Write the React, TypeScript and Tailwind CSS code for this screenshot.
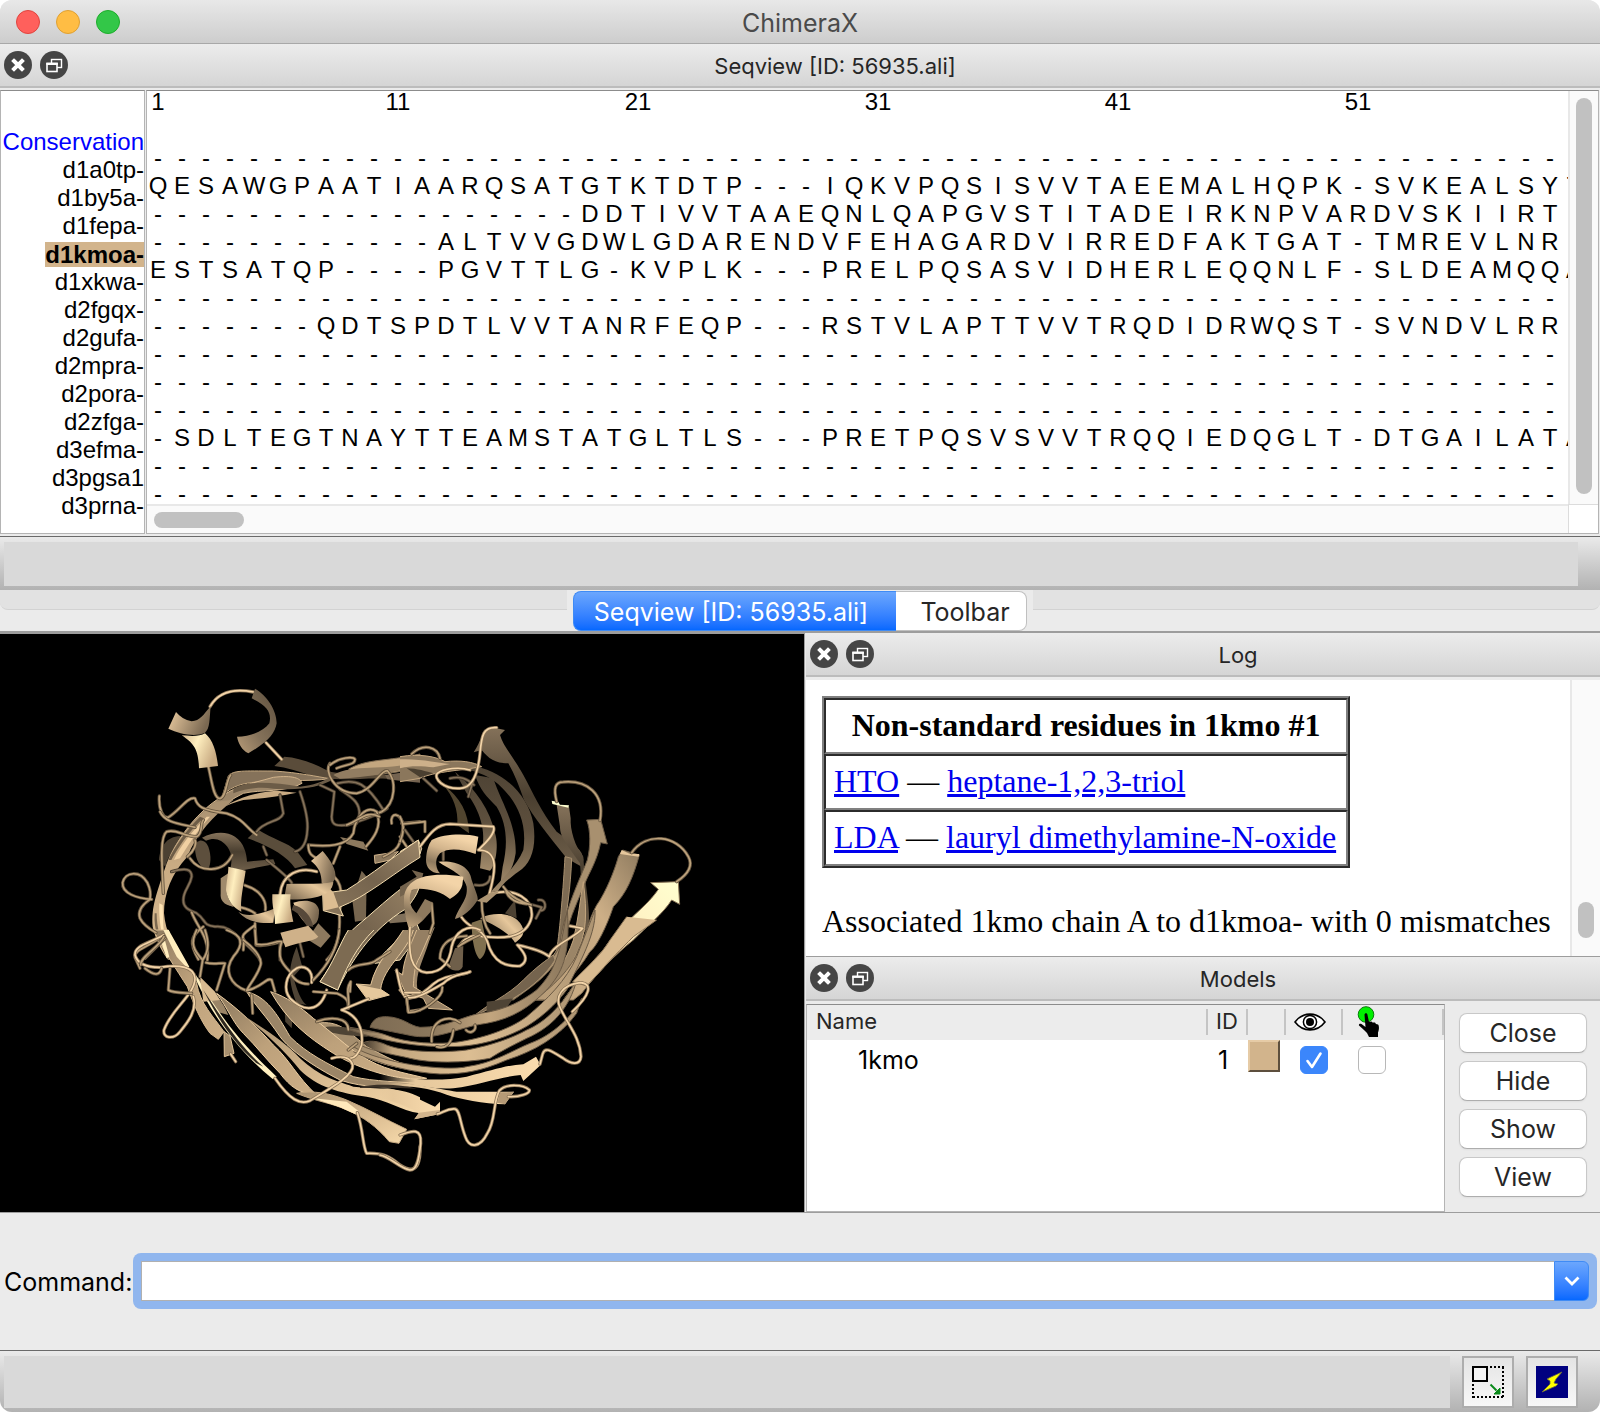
import { useState } from "react";

type SequenceRow = {
  name: string;
  residues: string;
  active?: boolean;
};

const GAPS = "-".repeat(59);

const sequences: SequenceRow[] = [
  { name: "d1a0tp-", residues: GAPS },
  { name: "d1by5a-", residues: "QESAWGPAATIAARQSATGTKTDTP---IQKVPQSISVVTAEEMALHQPK-SVKEALSYT" },
  { name: "d1fepa-", residues: "------------------DDTIVVTAAEQNLQAPGVSTITADEIRKNPVARDVSKIIRT" },
  { name: "d1kmoa-", residues: "------------ALTVVGDWLGDARENDVFEHAGARDVIRREDFAKTGAT-TMREVLNR", active: true },
  { name: "d1xkwa-", residues: "ESTSATQP----PGVTTLG-KVPLK---PRELPQSASVIDHERLEQQNLF-SLDEAMQQA" },
  { name: "d2fgqx-", residues: GAPS },
  { name: "d2gufa-", residues: "-------QDTSPDTLVVTANRFEQP---RSTVLAPTTVVTRQDIDRWQST-SVNDVLRR" },
  { name: "d2mpra-", residues: GAPS },
  { name: "d2pora-", residues: GAPS },
  { name: "d2zfga-", residues: GAPS },
  { name: "d3efma-", residues: "-SDLTEGTNAYTTEAMSTATGLTLS---PRETPQSVSVVTRQQIEDQGLT-DTGAILATA" },
  { name: "d3pgsa1", residues: GAPS },
  { name: "d3prna-", residues: GAPS },
];

const residueLinks = [
  { code: "HTO", name: "heptane-1,2,3-triol" },
  { code: "LDA", name: "lauryl dimethylamine-N-oxide" },
];

const modelActions = ["Close", "Hide", "Show", "View"];

// ---------- protein cartoon ----------

type Ribbon = { d: string; fill: string; edge?: string };
type Tone = "near" | "mid" | "far";
type Coil = { d: string; tone: Tone };
type Patch = { x: number; y: number; ribbons: Ribbon[]; coils: Coil[]; front?: Ribbon[] };

const coilShade: Record<Tone, [string, string]> = {
  near: ["#8b7558", "#f3d4a8"],
  mid: ["#63533e", "#bda27c"],
  far: ["#43382a", "#85725a"],
};

const patches: Patch[] = [
  // barrel, top left
  {
    x: 300,
    y: 78,
    ribbons: [
      { d: "M285,560 C290,535 315,535 325,560 C335,590 332,610 325,628 C300,625 285,600 285,560Z", fill: "#5d4f3d" },
      { d: "M177,600 C180,560 200,530 240,528 L262,545 C230,555 205,580 196,620Z", fill: "#4c4132" },
      { d: "M306,533 C340,515 380,513 405,530 C432,548 440,580 441,605 L520,598 L526,612 L420,632 L392,622 C398,590 392,575 382,560 C366,540 345,530 318,542Z", fill: "url(#farDown)" },
      { d: "M443,535 L472,508 C520,540 560,545 592,575 L622,615 L585,625 C560,585 500,555 443,535Z", fill: "#5a4d3b" },
      { d: "M523,318 L553,290 C600,293 640,310 690,335 C740,345 800,335 860,345 L862,356 C800,352 700,365 640,350 C600,335 560,322 523,318Z", fill: "#5a4c3a" },
      { d: "M385,348 C400,330 430,333 520,333 C600,338 650,350 690,356 C620,366 540,358 470,366 C430,370 400,376 368,405Z", fill: "#85725a", edge: "#c7aa82" },
      { d: "M362,412 C400,380 450,372 520,352 C580,345 602,355 606,370 C560,398 480,388 430,400 C370,430 320,470 290,520 L205,610 C230,530 300,450 362,412Z", fill: "#9c8669", edge: "#d2b48c" },
      { d: "M400,385 C450,360 520,368 600,380 C640,375 670,365 690,350 L700,358 C660,382 600,392 520,386 C480,380 440,385 400,400Z", fill: "#6c5c47" },
      { d: "M390,430 C430,408 480,395 530,392 L590,398 C540,410 480,415 430,420 C380,432 340,455 310,480Z", fill: "#c9ab83" },
      { d: "M745,328 C800,295 860,305 960,282 L960,330 C900,328 860,348 790,345", fill: "#c3a67f", edge: "#7d6a51" },
      { d: "M700,345 C760,310 850,335 960,305 L960,318 C880,338 800,352 720,356Z", fill: "#927d61" },
      { d: "M855,345 L960,330 L960,368 L900,362 L862,358Z", fill: "#746350" },
      { d: "M345,425 C280,480 225,540 200,610 C170,700 153,740 158,800 C170,850 190,880 205,900 L250,900 C220,850 197,820 192,760 C192,700 215,640 262,590 C290,520 340,470 400,420Z", fill: "url(#wall)" },
      { d: "M320,470 C270,520 240,560 222,600 L240,595 C262,560 292,510 330,470Z", fill: "#f0d0a2" },
      { d: "M300,470 C250,520 225,560 205,600 L214,600 C236,560 262,520 310,474Z", fill: "#6e5d47" },
      { d: "M178,730 C176,780 184,830 200,860 L190,800 L188,735Z", fill: "#ffe3b3" },
      { d: "M170,760 C170,800 180,850 215,900 L205,900 C180,860 160,810 164,760Z", fill: "#7b6850" },
      { d: "M757,720 L785,632 L800,650 L798,780 L765,785Z", fill: "#77664f" },
      { d: "M720,531 L790,545 L805,572 L740,552Z", fill: "#8d795e" },
      { d: "M823,586 L895,575 L870,600 L825,610Z", fill: "#8d795e", edge: "#d2b48c" },
      { d: "M860,770 L915,760 L925,785 L870,790Z", fill: "#80705a" },
      // inner strands that cross the middle of the barrel
      { d: "M960,650 C900,680 840,740 780,790 C740,820 720,860 703,900 L660,965 L713,990 C750,910 810,810 920,745 C945,712 962,692 960,650Z", fill: "url(#inner)", edge: "#f7e2b4" },
      { d: "M950,790 C890,840 850,880 825,910 L900,900 C920,870 950,840 962,820Z", fill: "#85725a", edge: "#f7e2b4" },
    ],
    coils: [
      { d: "M178,408 C175,450 190,475 205,472 C240,450 262,410 285,415 C292,440 305,450 380,460 C430,475 440,505 470,525", tone: "mid" },
      { d: "M180,455 C195,490 245,492 285,502", tone: "mid" },
      { d: "M540,405 L550,460 C540,488 495,480 470,515 M600,395 C612,430 625,480 622,510 C620,550 605,570 585,575", tone: "far" },
      { d: "M660,375 L703,395 L695,470 C695,498 712,498 745,495 C800,475 845,462 862,445", tone: "far" },
      { d: "M712,370 C770,355 800,370 850,450 M720,388 C750,410 782,425 778,465 L770,490", tone: "far" },
      { d: "M490,560 L500,585 M500,600 C550,640 570,660 575,668", tone: "far" },
      { d: "M190,700 C185,600 180,530 200,515 C230,505 250,530 290,530 C310,520 300,490 310,480", tone: "mid" },
      { d: "M270,595 C300,640 370,640 397,585 M262,590 C285,570 290,550 285,540", tone: "mid" },
      { d: "M155,718 C110,715 65,700 68,668 C75,635 120,630 142,668 C152,690 152,700 150,718 C125,735 113,755 120,775 C130,795 150,808 168,818", tone: "mid" },
      { d: "M190,825 C150,860 100,868 105,892 L120,925 M195,835 L135,895", tone: "mid" },
      { d: "M215,635 C260,622 275,628 275,650 C270,680 250,690 250,720 C250,745 268,750 290,760 C320,780 305,795 345,800 C390,795 410,830 435,850 C455,870 470,880 480,900", tone: "far" },
      { d: "M275,757 C290,800 330,830 322,900 M310,800 C270,830 268,850 295,898", tone: "mid" },
      { d: "M330,140 C350,105 385,82 460,96", tone: "near" },
      { d: "M498,248 L545,298", tone: "near" },
      { d: "M325,320 C335,360 340,415 360,416 C380,410 378,360 392,345", tone: "mid" },
      { d: "M690,310 C672,330 700,400 770,400 C820,390 840,330 862,332 C890,360 888,430 845,455 L790,475", tone: "mid" },
      { d: "M690,315 C720,290 760,290 765,298 C765,315 740,312 710,325", tone: "mid" },
      { d: "M625,555 C680,560 740,560 760,520 C765,470 800,435 830,455 C848,500 820,535 798,560", tone: "mid" },
      { d: "M625,555 C625,590 645,590 660,600 M720,560 L700,610", tone: "mid" },
      { d: "M740,495 C780,480 800,450 838,470", tone: "mid" },
      { d: "M875,490 C868,455 905,455 910,500 C900,560 895,570 850,590 M905,490 L960,485 M900,530 L920,560", tone: "mid" },
      { d: "M680,640 C725,650 730,700 718,760 C722,830 710,870 680,900", tone: "mid" },
      { d: "M540,705 C545,640 600,620 650,635", tone: "near" },
      { d: "M435,676 C480,690 500,720 496,750 M378,725 C410,745 440,740 465,760", tone: "mid" },
      { d: "M465,790 L468,855 C500,862 530,845 552,845 M465,795 C440,815 420,825 432,840 L430,870", tone: "mid" },
      { d: "M540,845 L540,900 M600,850 L610,890", tone: "far" },
    ],
    front: [
      { d: "M228,156 L205,206 C240,222 285,232 315,218 C330,205 328,180 332,138 C310,165 300,182 275,184 C255,180 240,170 228,156Z", fill: "url(#lightRight)" },
      { d: "M245,226 C280,250 295,265 297,325 L354,318 C350,280 340,240 315,220 C300,230 270,228 245,226Z", fill: "url(#glow)" },
      { d: "M465,86 C500,105 530,150 530,190 C525,220 505,245 445,280 C425,270 415,250 411,230 C450,230 490,215 508,190 C515,160 505,140 455,115Z", fill: "url(#hookShade)" },
      { d: "M362,655 L385,640 L380,700 C385,720 395,732 400,740 C370,735 360,720 362,700Z", fill: "#a08a6c" },
      { d: "M385,620 L437,632 C430,680 420,720 424,755 C400,745 380,715 378,690 C380,660 385,640 385,620Z", fill: "url(#glow)" },
      { d: "M415,755 C440,775 490,760 525,745 L520,788 C480,792 440,785 415,755Z", fill: "url(#lightLeft)" },
      { d: "M955,540 C880,590 820,640 740,690 L690,697 L682,678 L668,700 L670,752 L730,768 L718,742 C800,710 880,640 960,592Z", fill: "url(#inner)", edge: "#f4dcae" },
      { d: "M668,698 L684,680 L700,697 L716,742 L672,752Z", fill: "#dcbd92" },
      { d: "M633,603 L668,573 C692,600 710,630 706,655 L690,680 L665,670 C665,640 655,620 633,603Z", fill: "url(#lightRight)" },
      { d: "M560,672 C600,670 660,675 700,665 C698,700 660,722 552,718Z", fill: "url(#lightLeft)" },
      { d: "M580,728 C610,718 650,718 657,750 C658,785 645,800 625,798 C600,775 590,755 580,728Z", fill: "url(#lightRight)" },
      { d: "M580,735 C610,740 635,770 640,800 L620,798 C605,770 590,755 575,750Z", fill: "#57493a" },
      { d: "M655,790 L692,828 L662,863 L622,838Z", fill: "#8d795e" },
      { d: "M541,818 L625,797 L655,830 C640,845 600,845 556,862Z", fill: "#cfb189" },
      { d: "M517,703 L572,703 C568,730 575,760 580,785 L525,792 C525,760 515,740 517,703Z", fill: "url(#glow)" },
    ],
  },
  // barrel, top right
  {
    x: 1200,
    y: 198,
    ribbons: [
      { d: "M130,255 C180,290 207,340 207,400 L172,375 C175,330 160,290 130,255Z", fill: "#51452f" },
      { d: "M165,215 C230,270 270,330 285,400 C298,440 285,500 270,512 L240,505 L245,450 C260,400 240,330 200,280Z", fill: "url(#farUp)" },
      { d: "M225,225 L280,235 C300,300 350,370 347,460 C340,510 315,540 300,560 L308,500 C325,430 320,370 290,320 C260,290 240,270 225,225Z", fill: "url(#farUp)" },
      { d: "M210,195 C320,215 385,290 400,370 C410,440 395,490 355,515 C320,540 300,560 290,580 L265,585 C300,540 350,500 370,450 C380,380 360,330 330,290 C290,240 260,225 210,210Z", fill: "url(#farUp)" },
      { d: "M315,90 L268,80 C245,95 245,120 221,157 L245,150 C265,175 285,190 325,190 C345,225 358,260 372,300 C400,350 440,400 500,475 L545,500 L550,480 C550,450 520,430 470,395 C420,330 400,280 370,225 C340,170 310,140 300,105Z", fill: "url(#farDown)" },
      { d: "M0,170 C60,160 110,170 135,185 C180,180 220,185 245,200 C180,212 100,215 60,235 L0,245", fill: "#8b775c", edge: "#c3a67f" },
      { d: "M0,178 C60,175 120,190 150,192 L100,202 C70,200 40,195 0,205Z", fill: "#cdb08a" },
      { d: "M20,205 C50,205 80,215 100,220 L60,232Z", fill: "#4a3f30" },
      { d: "M495,470 L515,475 C512,560 500,640 490,700 C480,770 440,800 400,830 L330,885 L320,900 C390,830 450,790 470,750 C480,690 490,560 495,470Z", fill: "#7d6b53", edge: "#a8906f" },
      { d: "M470,315 L507,320 L512,355 C510,390 525,440 550,470 C555,560 572,620 566,680 L550,700 C550,620 545,560 540,490 C500,430 480,410 480,380Z", fill: "url(#farDown)" },
      { d: "M560,360 L602,358 L622,432 L602,428 C592,480 567,520 557,545 C535,600 510,650 500,700 C485,790 440,830 340,900 L300,900 C380,860 450,800 478,740 C490,640 530,560 562,480 C572,440 572,390 560,360Z", fill: "#a8906f", edge: "#6b5a45" },
      { d: "M550,545 C562,640 560,700 530,760 C500,830 450,880 430,900 L400,900 C460,840 500,780 520,720 C535,660 540,600 550,545Z", fill: "#9b8567", edge: "#c2a57e" },
      { d: "M668,450 L718,465 C700,530 680,580 640,620 C620,680 590,740 570,755 C530,820 480,870 440,900 L400,900 C450,870 520,800 535,750 C560,700 570,640 600,600 C630,550 650,490 655,470Z", fill: "url(#slant)", edge: "#6e5d47" },
      { d: "M752,548 L835,545 L839,613 L815,600 C790,640 740,680 700,720 C650,760 590,820 545,880 L520,900 L490,900 C520,860 560,800 610,750 C640,700 700,650 740,610 C760,590 770,575 775,568Z", fill: "url(#brightArrow)", edge: "#8b7558" },
      { d: "M455,302 L475,306 L480,314 L507,316 L505,323 L457,312Z", fill: "#ffffd0" },
      { d: "M665,450 L690,462 L718,462 L716,470 L660,462Z", fill: "#e6c79c" },
      { d: "M315,640 L345,600 L350,655Z", fill: "#4c4132" },
      { d: "M240,655 C280,635 330,640 352,660 C382,690 372,710 345,728 C325,695 280,675 240,655Z", fill: "url(#lightLeft)" },
      { d: "M215,668 L245,658 C250,700 275,750 240,778 C220,760 215,700 215,668Z", fill: "#80704f" },
      { d: "M165,745 L190,738 L188,800 C180,820 150,810 145,800Z", fill: "#6f5f4a" },
      { d: "M0,455 L55,420 L65,445 L60,462 L0,505", fill: "#85725a", edge: "#f4dcae" },
      { d: "M0,560 L50,530 L35,510 L70,520 L60,560 L0,590Z", fill: "#74634d" },
      { d: "M105,680 L60,720 C40,770 15,800 0,830 L20,878 L52,868 C45,820 70,780 88,722Z", fill: "#9c8669" },
    ],
    coils: [
      { d: "M35,162 C70,128 112,140 120,175", tone: "mid" },
      { d: "M70,235 L110,272 M150,235 C180,228 200,235 222,255 M205,290 L220,240", tone: "far" },
      { d: "M290,83 C250,80 245,105 240,160 C235,210 220,265 180,265 C130,268 100,235 112,220 C130,205 180,200 210,210", tone: "near" },
      { d: "M470,305 C460,265 465,246 490,246 C560,240 615,280 600,362", tone: "mid" },
      { d: "M695,458 C740,395 830,405 865,470 C882,500 860,525 830,545", tone: "mid" },
      { d: "M0,350 C15,380 10,400 0,425 M10,372 L75,365 L75,395", tone: "mid" },
      { d: "M15,390 L40,425 M130,450 L130,480 M225,555 C250,560 270,550 270,530", tone: "far" },
      { d: "M60,440 C90,400 110,372 150,372 L280,380 C290,400 250,435 235,450 C300,450 285,520 268,582 C350,560 400,600 395,650 C380,720 300,715 250,710 C210,700 190,720 180,735", tone: "near" },
      { d: "M245,600 C245,650 255,680 270,700 M310,560 C330,590 370,610 395,615 M318,575 C330,600 350,608 380,612", tone: "mid" },
      { d: "M400,615 L425,622 L408,655 M415,600 C440,595 440,630 425,632", tone: "far" },
      { d: "M95,610 L100,670 L90,700", tone: "mid" },
      { d: "M120,775 C120,740 140,710 200,708 M120,775 L150,800 M175,740 C200,720 230,710 240,705", tone: "mid" },
      { d: "M185,652 C210,690 245,680 262,725 C280,790 320,800 360,798 C392,780 370,755 352,735 C400,745 430,755 448,770 C455,735 530,710 548,685 L510,678", tone: "near" },
      { d: "M30,680 C25,760 30,812 80,818 C130,818 150,780 155,740 C165,695 205,670 240,690", tone: "near" },
      { d: "M0,870 C30,905 60,890 100,852 C140,820 180,830 210,815", tone: "near" },
    ],
    front: [
      { d: "M95,420 C130,400 200,400 235,410 L227,462 C190,450 150,440 120,460 C100,480 110,510 120,520 C90,520 78,500 78,480 C80,450 85,435 95,420Z", fill: "url(#helix)" },
      { d: "M115,485 C170,480 210,500 215,540 C225,570 235,590 233,600 C215,630 190,650 165,657 C175,620 205,600 200,560 C190,520 150,510 115,485Z", fill: "url(#lightRight)" },
      { d: "M75,597 L96,607 L92,635 L65,665 L40,655Z", fill: "#8d795e" },
      { d: "M12,590 C20,540 70,512 190,530 L187,555 C180,580 160,590 150,597 C120,570 60,560 35,570 C22,600 30,630 65,652 C70,665 55,680 25,682 C15,650 10,620 12,590Z", fill: "url(#helix)" },
      { d: "M230,603 L268,580 L300,572 L260,608Z", fill: "#ac9472" },
    ],
  },
  // barrel, bottom left
  {
    x: 300,
    y: 888,
    ribbons: [
      { d: "M590,50 L607,110 L580,140 C590,180 605,215 620,225 L590,220 C568,160 560,120 590,50Z", fill: "#4f4435" },
      { d: "M553,230 L580,240 L575,295 L556,275Z", fill: "#4f4435" },
      { d: "M650,280 C720,268 750,310 800,350 C860,380 900,408 960,408 L960,418 C880,418 800,390 740,350", fill: "#a58e6e", edge: "#e2c499" },
      { d: "M680,290 C750,285 800,310 840,312 L800,320 C760,318 720,315 660,300Z", fill: "#4f4435" },
      { d: "M512,185 C560,200 600,230 640,265 C700,310 740,350 780,375 C850,420 900,425 980,445 C900,455 780,420 700,370 C620,320 560,270 512,185Z", fill: "url(#strand)", edge: "#edcea1" },
      { d: "M440,185 C500,200 530,250 570,320 C620,370 680,400 760,440 C820,455 900,455 990,462 C880,475 790,475 720,450 C640,410 570,360 540,320 C500,260 460,220 440,185Z", fill: "#9b8567", edge: "#e6c89c" },
      { d: "M160,0 L205,0 C220,60 270,110 290,160 C300,220 340,260 372,305 L355,328 L330,310 C300,270 280,220 262,170 C230,120 190,60 160,0Z", fill: "url(#strand)", edge: "#d9bb91" },
      { d: "M372,305 L390,318 L402,370 L373,380Z", fill: "#a8906f", edge: "#e2c499" },
      { d: "M290,140 C340,180 370,215 385,255 L350,245 C330,210 305,170 290,140Z", fill: "#9b8567" },
      { d: "M350,190 C420,240 470,290 520,345 C570,390 590,440 650,495 C600,492 570,470 540,430 C500,390 470,350 430,310 C400,280 380,230 350,190Z", fill: "url(#strand)", edge: "#edcea1" },
      { d: "M420,250 C500,300 560,340 600,385 C660,440 700,450 760,470 C860,480 900,470 960,502 L960,550 C900,540 860,510 800,500 C720,490 650,470 600,420 C560,370 500,310 420,250", fill: "url(#lightDown)" },
      { d: "M590,490 C640,480 690,490 740,510 C800,535 860,570 920,598 L897,640 L868,635 C830,590 790,560 740,540 C700,520 650,515 590,490Z", fill: "url(#lightDown)", edge: "#c7aa82" },
      { d: "M288,135 C340,225 400,320 530,440 L518,447 C400,350 330,240 288,150Z", fill: "#fff0c0" },
      { d: "M300,140 L345,185 L360,210 L310,215 Z", fill: "#d9bb91" },
      { d: "M180,25 L200,85 L208,80 L192,20Z M190,0 L230,80 L262,115 L268,110 L206,0Z", fill: "#ffedbd" },
      { d: "M310,180 C370,270 420,350 490,410 L470,400 C400,340 350,260 310,180Z", fill: "#2f2820" },
      { d: "M640,505 L740,515 L778,545 L765,552 L720,532Z", fill: "#ffe9bb" },
      { d: "M745,0 C720,40 700,100 660,155 L713,180 C740,110 770,50 822,0", fill: "#7d6b52", edge: "#f7e2b4" },
      { d: "M910,0 C880,50 830,90 812,165 L768,162 L805,212 L868,195 L842,178 C850,110 920,70 940,0", fill: "#9b8567", edge: "#e6c89c" },
      { d: "M768,162 L812,172 L842,178 L868,195 L805,210Z", fill: "#e6c89c" },
    ],
    coils: [
      { d: "M290,0 C270,40 280,60 308,90 C330,60 325,30 315,0 M308,90 L300,140", tone: "mid" },
      { d: "M318,98 C340,105 360,98 375,100 L350,180", tone: "mid" },
      { d: "M380,0 C425,15 435,40 400,80 C370,120 390,165 440,182", tone: "mid" },
      { d: "M430,30 C470,60 490,90 480,110 C470,140 450,160 440,182 C490,170 500,140 515,150 L525,185 M455,195 L458,250", tone: "mid" },
      { d: "M465,0 L468,42 C500,52 530,30 545,35 C530,80 545,100 570,125 C580,150 600,162 625,162", tone: "mid" },
      { d: "M635,158 C640,115 610,105 590,115 C555,135 550,180 570,205 C610,245 660,250 680,180", tone: "near" },
      { d: "M640,150 C670,120 710,70 718,0 M640,185 L710,190 C745,205 745,215 745,235", tone: "mid" },
      { d: "M745,235 C750,200 735,180 752,155 L750,185 M745,120 C770,95 810,110 830,90 L870,65", tone: "mid" },
      { d: "M650,275 C690,260 745,260 745,300 M745,360 L770,340", tone: "mid" },
      { d: "M890,120 C900,170 905,200 925,205 L960,195 M920,205 L925,245 L960,240", tone: "near" },
      { d: "M190,15 C150,40 103,45 105,75 C110,95 130,112 180,112 C240,103 282,110 285,145 C285,195 215,235 192,300 C188,325 220,330 240,305 C265,275 292,240 280,200", tone: "near" },
      { d: "M192,20 C180,50 120,80 122,105 M135,115 C160,135 178,140 185,115 M210,115 L205,180 C220,190 255,188 275,190", tone: "mid" },
      { d: "M392,372 L407,395", tone: "near" },
      { d: "M725,240 L805,207 M725,240 C775,255 790,300 785,345 C775,375 765,385 750,385", tone: "near" },
      { d: "M525,445 C570,510 600,525 630,512 C700,470 762,435 758,405 C750,378 720,378 695,385", tone: "near" },
      { d: "M772,548 C790,600 788,650 800,670 C850,668 870,680 900,705 C940,730 962,720 960,650", tone: "near" },
    ],
  },
  // barrel, bottom right: long strands fade in from the left and sweep up
  {
    x: 1140,
    y: 888,
    ribbons: [
      { d: "M270,268 C330,215 380,200 430,150 C470,110 500,90 520,75 L525,90 C500,130 460,170 400,205 C360,225 310,240 270,268Z", fill: "#75644e", edge: "#a8906f" },
      { d: "M320,215 L400,205 L375,240 L320,245Z", fill: "#4f4435" },
      { d: "M-30,292 C-20,262 0,260 20,260 C70,262 90,288 120,292 C200,292 240,262 300,250 C380,240 430,210 470,180 C510,140 530,100 545,30 L562,-60 C572,80 545,130 500,180 C450,230 400,265 320,280 C240,290 180,330 100,318 C60,310 10,300 -30,292", fill: "url(#sweepDim)", edge: "#6b5a45" },
      { d: "M-90,292 C-40,300 0,308 20,316 C80,340 180,345 240,335 C330,320 400,290 440,260 C500,210 560,150 590,80 L645,-60 C650,20 580,130 560,180 C530,220 480,270 420,300 C360,330 300,345 240,349 C160,352 60,350 -90,300", fill: "url(#sweep)", edge: "#6b5a45" },
      { d: "M-60,345 C-40,325 0,335 20,345 C70,365 180,370 260,360 C340,345 400,322 440,300 C500,275 550,220 590,150 C570,230 520,290 440,325 C400,345 360,365 330,385 C250,400 150,400 90,385 C50,375 -20,365 -60,345", fill: "url(#sweep)", edge: "#6b5a45" },
      { d: "M-80,350 C0,400 200,425 260,410 C340,400 400,360 450,340 C520,315 580,255 605,205 L590,250 C540,320 460,365 380,390 C300,425 250,432 180,432 C100,428 0,405 -80,365", fill: "url(#sweep)", edge: "#6b5a45" },
      { d: "M0,428 C80,450 180,455 260,440 C340,420 380,405 430,403 L468,380 L482,405 L430,453 L422,435 C360,440 300,465 220,475 C140,480 80,455 0,450", fill: "url(#sweepLight)" },
      { d: "M0,456 C100,458 180,478 230,485 L360,485 L402,485 L375,523 C310,520 240,508 200,494 C150,475 80,464 0,466", fill: "url(#sweepLight)" },
      { d: "M360,487 L380,487 L402,485 L375,523 L352,518Z", fill: "#b59a76" },
      { d: "M-60,470 C0,458 80,466 110,476 L60,474 C20,470 -20,474 -60,474Z", fill: "#3b3227" },
      { d: "M0,472 C60,475 120,510 165,530 L180,515 L180,552 L103,568 L117,548 C80,530 40,512 0,505", fill: "url(#sweepLight)" },
      { d: "M103,568 L117,548 L180,540 L180,552Z", fill: "#d2b48c" },
      { d: "M830,-30 L760,20 C720,60 690,90 660,125 L620,168 L578,155 C620,110 660,80 690,30 L740,-40", fill: "#d9bb91", edge: "#8b7558" },
      { d: "M155,0 L120,80 C100,110 102,150 100,170 L150,200 L217,240 L145,235 L130,205 L75,185 L45,120 L68,135 C70,90 90,50 110,0", fill: "#957f63", edge: "#d9bb91" },
    ],
    coils: [
      { d: "M155,335 C150,270 205,250 240,278 M258,300 C272,315 290,300 285,285 M220,300 C215,345 195,358 170,350", tone: "mid" },
      { d: "M75,188 L120,188", tone: "near" },
      { d: "M75,200 C100,212 140,190 190,160 C220,130 250,135 270,125", tone: "near" },
      { d: "M80,205 L85,247 C120,250 190,205 187,172", tone: "mid" },
      { d: "M577,245 C630,195 640,160 600,158 C545,165 525,200 540,232 C560,280 600,320 603,380 C600,410 570,400 550,385 C510,360 495,350 488,372 L480,402", tone: "near" },
      { d: "M385,500 C420,502 450,490 448,480 C430,463 378,460 358,482 C338,520 348,570 322,610 C300,655 268,655 256,620 C240,580 240,540 225,537 C200,535 190,548 172,552", tone: "near" },
      { d: "M60,615 C100,600 125,595 122,640 C117,690 110,720 90,720 C60,715 30,680 0,675", tone: "near" },
    ],
  },
];

function RibbonShapes({ ribbons }: { ribbons: Ribbon[] }) {
  return (
    <>
      {ribbons.map((r, i) => (
        <path key={i} d={r.d} fill={r.fill} stroke={r.edge ?? "none"} strokeWidth={3} />
      ))}
    </>
  );
}

function ProteinView() {
  return (
    <svg viewBox="0 0 2412 1734" className="block h-full w-full" role="img" aria-label="1kmo ribbon model">
      <defs>
        <linearGradient id="glow" x1="0" y1="0" x2="1" y2="0.4">
          <stop offset="0" stopColor="#d2b48c" />
          <stop offset="0.45" stopColor="#ffefbf" />
          <stop offset="1" stopColor="#c9ab83" />
        </linearGradient>
        <linearGradient id="helix" x1="0" y1="1" x2="0.4" y2="0">
          <stop offset="0" stopColor="#c3a67f" />
          <stop offset="0.3" stopColor="#8d795e" />
          <stop offset="0.65" stopColor="#d2b48c" />
          <stop offset="1" stopColor="#f3d4a8" />
        </linearGradient>
        <linearGradient id="lightRight" x1="0" y1="0" x2="1" y2="0.3">
          <stop offset="0" stopColor="#f0d0a4" />
          <stop offset="1" stopColor="#7a6851" />
        </linearGradient>
        <linearGradient id="lightLeft" x1="1" y1="0" x2="0" y2="0.6">
          <stop offset="0" stopColor="#a8906f" />
          <stop offset="0.4" stopColor="#e6c79b" />
          <stop offset="1" stopColor="#8b775c" />
        </linearGradient>
        <linearGradient id="hookShade" x1="0" y1="1" x2="1" y2="0">
          <stop offset="0" stopColor="#b99d79" />
          <stop offset="0.4" stopColor="#85725a" />
          <stop offset="1" stopColor="#5d4f3d" />
        </linearGradient>
        <linearGradient id="farDown" x1="0" y1="0" x2="0" y2="1">
          <stop offset="0" stopColor="#85725a" />
          <stop offset="0.5" stopColor="#4a3f30" />
          <stop offset="1" stopColor="#6e5e49" />
        </linearGradient>
        <linearGradient id="farUp" x1="0" y1="0" x2="0" y2="1">
          <stop offset="0" stopColor="#4f4435" />
          <stop offset="0.5" stopColor="#5d4f3d" />
          <stop offset="1" stopColor="#a28b6b" />
        </linearGradient>
        <linearGradient id="wall" x1="0" y1="0" x2="0" y2="1">
          <stop offset="0" stopColor="#a89070" />
          <stop offset="0.4" stopColor="#c9ab83" />
          <stop offset="1" stopColor="#d9bb91" />
        </linearGradient>
        <linearGradient id="slant" x1="1" y1="0" x2="0" y2="1">
          <stop offset="0" stopColor="#8f7b5f" />
          <stop offset="0.4" stopColor="#cdaf87" />
          <stop offset="1" stopColor="#b59a76" />
        </linearGradient>
        <linearGradient id="brightArrow" x1="1" y1="0" x2="0" y2="1">
          <stop offset="0" stopColor="#ffffd0" />
          <stop offset="0.35" stopColor="#fff2c4" />
          <stop offset="0.6" stopColor="#d9bb91" />
          <stop offset="1" stopColor="#c3a67f" />
        </linearGradient>
        <linearGradient id="inner" x1="1" y1="0" x2="0" y2="1">
          <stop offset="0" stopColor="#9b8567" />
          <stop offset="0.5" stopColor="#75644e" />
          <stop offset="1" stopColor="#8b775c" />
        </linearGradient>
        <linearGradient id="strand" x1="0" y1="0" x2="1" y2="1">
          <stop offset="0" stopColor="#8d795e" />
          <stop offset="0.5" stopColor="#bda17b" />
          <stop offset="1" stopColor="#cdaf87" />
        </linearGradient>
        <linearGradient id="lightDown" x1="0" y1="0" x2="1" y2="1">
          <stop offset="0" stopColor="#a8906f" />
          <stop offset="0.6" stopColor="#dcbe93" />
          <stop offset="1" stopColor="#f6d9aa" />
        </linearGradient>
        <linearGradient id="sweep" x1="0" y1="0" x2="1" y2="0">
          <stop offset="0" stopColor="#b99d79" stopOpacity="0.3" />
          <stop offset="0.15" stopColor="#c3a67f" />
          <stop offset="0.5" stopColor="#dcbe93" />
          <stop offset="1" stopColor="#ad9472" />
        </linearGradient>
        <linearGradient id="sweepDim" x1="0" y1="0" x2="1" y2="0">
          <stop offset="0" stopColor="#7d6b53" />
          <stop offset="0.3" stopColor="#8b775c" />
          <stop offset="0.6" stopColor="#c3a67f" />
          <stop offset="1" stopColor="#8b775c" />
        </linearGradient>
        <linearGradient id="sweepLight" x1="0" y1="0" x2="1" y2="0">
          <stop offset="0" stopColor="#e6c89c" stopOpacity="0" />
          <stop offset="0.22" stopColor="#e6c89c" />
          <stop offset="1" stopColor="#fadcae" />
        </linearGradient>
      </defs>
      {patches.map((p, i) => (
        <g key={i} transform={`translate(${p.x} ${p.y})`}>
          <RibbonShapes ribbons={p.ribbons} />
        </g>
      ))}
      {patches.map((p, i) => (
        <g key={i} transform={`translate(${p.x} ${p.y})`} fill="none" strokeLinecap="round" strokeLinejoin="round">
          {p.coils.map((c, j) => (
            <g key={j}>
              <path d={c.d} stroke={coilShade[c.tone][0]} strokeWidth={10} />
              <path d={c.d} stroke={coilShade[c.tone][1]} strokeWidth={5} />
            </g>
          ))}
        </g>
      ))}
      {patches.map((p, i) => (
        <g key={i} transform={`translate(${p.x} ${p.y})`}>
          <RibbonShapes ribbons={p.front ?? []} />
        </g>
      ))}
    </svg>
  );
}

// ---------- icons ----------

function CloseIcon() {
  return (
    <svg viewBox="0 0 28 28" className="size-7" aria-hidden="true">
      <circle cx="14" cy="14" r="14" fill="#454545" />
      <path d="M10 10l8 8M18 10l-8 8" stroke="#fff" strokeWidth="4" strokeLinecap="square" />
    </svg>
  );
}

function FloatIcon() {
  return (
    <svg viewBox="0 0 28 28" className="size-7" aria-hidden="true">
      <circle cx="14" cy="14" r="14" fill="#454545" />
      <rect x="11.5" y="8.5" width="10" height="8" fill="none" stroke="#fff" strokeWidth="1.4" />
      <rect x="7" y="12.5" width="10" height="8" fill="#454545" stroke="#fff" strokeWidth="1.6" />
      <path d="M6.4 12.8h11.4" stroke="#fff" strokeWidth="2.2" />
    </svg>
  );
}

function EyeIcon() {
  return (
    <svg viewBox="0 0 32 18" className="h-[18px] w-8" aria-hidden="true">
      <path d="M1 9C9-1.5 23-1.5 31 9C23 19.500 9 19.500 1 9Z" fill="#fff" stroke="#000" strokeWidth="1.6" />
      <circle cx="16" cy="9" r="6.600" fill="#fff" stroke="#000" strokeWidth="1.500" />
      <circle cx="16" cy="9" r="4" fill="#000" />
    </svg>
  );
}

function SelectIcon() {
  return (
    <svg viewBox="0 0 24 32" className="h-8 w-6" aria-hidden="true">
      <circle cx="9" cy="8.500" r="7.800" fill="#00f000" stroke="#0a7a0a" strokeWidth="1" />
      <path
        d="M7.500 8.500C8 6.800 10 6.800 10.400 8.500L12 16L14.500 15.500L15.500 16.500L18 16.500L19 18L21 18.500C22.500 20 22 24 21 26.500L21 31L12 31L10 27C7 24 4 21 2 19.500C1.500 18 3 17.500 4.500 18L8.500 21Z"
        fill="#000"
      />
    </svg>
  );
}

function ResizeIcon() {
  return (
    <svg viewBox="0 0 32 32" className="size-8" fill="none" aria-hidden="true">
      <path d="M18 1h14M31 1v31M1 18v14M1 31h30" stroke="#000" strokeWidth="2" strokeDasharray="2 2" />
      <rect x="1" y="1" width="14" height="14" fill="#f4f4f4" stroke="#000" strokeWidth="2" />
      <path d="M18.500 18.500l6 6" stroke="#0a8a1a" strokeWidth="2" />
      <path d="M28 22v6h-6z" fill="#0a8a1a" stroke="#0a8a1a" />
    </svg>
  );
}

function LightningIcon() {
  return (
    <svg viewBox="0 0 32 32" className="size-8" aria-hidden="true">
      <rect width="32" height="32" fill="#000080" />
      <path d="M26 6L15 11L11 13L14 15L14 18L6 26L20 20L22 18L18 17L20 13Z" fill="#ffff00" stroke="#6b6b3c" strokeWidth="0.800" />
    </svg>
  );
}

// ---------- panels ----------

function DockHeader({ title }: { title: string }) {
  return (
    <header className="flex h-11 items-center gap-2 border-b-2 border-[#bcbcbc] bg-linear-to-b from-[#ececec] to-[#d5d5d5] pl-1">
      <button type="button" aria-label={`Close ${title}`} className="rounded-full">
        <CloseIcon />
      </button>
      <button type="button" aria-label={`Float ${title}`} className="rounded-full">
        <FloatIcon />
      </button>
      <h2 className="flex-1 pt-0.5 pr-1.5 text-center text-[22px] leading-7 text-[#262626]">{title}</h2>
    </header>
  );
}

function SequencePanel() {
  return (
    <div className="mt-0.5 flex gap-px pr-px pb-0.5 font-['Liberation_Sans',Arial,sans-serif] text-2xl text-black">
      <div className="w-[145px] shrink-0 border border-[#b4b4b4] border-t-[#8c8c8c] bg-white pt-[37px]">
        <div className="h-7 text-right leading-7 text-[#0000ff]">Conservation</div>
        {sequences.map((s) => (
          <div key={s.name} className="flex h-7 items-center justify-end">
            {s.active ? (
              <span className="bg-[#d2b48c] leading-[25px] font-bold">{s.name}</span>
            ) : (
              <span className="leading-7">{s.name}</span>
            )}
          </div>
        ))}
      </div>

      <div className="grid min-w-0 flex-1 grid-cols-[minmax(0,1fr)_30px] grid-rows-[413px_29px] border border-[#b4b4b4] border-t-[#8c8c8c] bg-white">
        <div className="-ml-px min-w-0">
          <div className="flex h-[53px] leading-[22px]">
            {Array.from({ length: 59 }, (_, i) => (
              <span key={i} className="flex w-6 shrink-0 justify-center whitespace-nowrap">
                {i % 10 === 0 ? i + 1 : ""}
              </span>
            ))}
          </div>
          <div className="overflow-x-clip">
            {sequences.map((s) => (
              <div key={s.name} className="flex h-7 leading-7">
                {s.residues.split("").map((r, i) => (
                  <span key={i} className="w-6 shrink-0 text-center">
                    {r}
                  </span>
                ))}
              </div>
            ))}
          </div>
        </div>
        <div className="border-l-2 border-[#e8e8e8] bg-[#fafafa] px-1.5 pt-[7px] pb-2.5">
          <div className="h-full w-4 rounded-full bg-[#c1c1c1]" />
        </div>
        <div className="border-t-2 border-[#e8e8e8] bg-[#fafafa] px-[7px] py-1.5">
          <div className="h-4 w-[90px] rounded-full bg-[#c1c1c1]" />
        </div>
        <div className="border-t border-l border-[#dcdcdc] bg-white" />
      </div>
    </div>
  );
}

function LogPanel() {
  return (
    <section>
      <DockHeader title="Log" />
      <div className="mt-[3px] flex bg-white">
        <div className="min-w-0 flex-1 p-4 pr-0 font-['Liberation_Serif','Times_New_Roman',serif] text-[32px] leading-9 text-black">
          <table className="border-separate border-spacing-0 border-2 border-t-[#808080] border-r-[#2b2b2b] border-b-[#2b2b2b] border-l-[#808080]">
            <thead>
              <tr>
                <th className="border-2 border-t-[#2b2b2b] border-r-[#808080] border-b-[#808080] border-l-[#2b2b2b] px-2 pt-[7px] pb-[9px] font-bold">
                  Non-standard residues in 1kmo #1
                </th>
              </tr>
            </thead>
            <tbody>
              {residueLinks.map((r) => (
                <tr key={r.code}>
                  <td className="border-2 border-t-[#2b2b2b] border-r-[#808080] border-b-[#808080] border-l-[#2b2b2b] pt-[7px] pr-2.5 pb-[9px] pl-2 whitespace-nowrap">
                    <a href={`#${r.code}`} className="text-[#0000ee] underline">{r.code}</a>
                    {" — "}
                    <a href={`#${r.code}-name`} className="text-[#0000ee] underline">{r.name}</a>
                  </td>
                </tr>
              ))}
            </tbody>
          </table>
          <p className="mt-[35px] mb-px whitespace-nowrap">Associated 1kmo chain A to d1kmoa- with 0 mismatches</p>
        </div>
        <div className="flex w-[30px] flex-col justify-end border-l-2 border-[#e8e8e8] bg-[#fafafa] px-1.5 pb-[18px]">
          <div className="h-9 w-4 rounded-full bg-[#c1c1c1]" />
        </div>
      </div>
    </section>
  );
}

function ModelsPanel() {
  const [shown, setShown] = useState(true);
  const [selected, setSelected] = useState(false);

  return (
    <section className="flex flex-1 flex-col border-t border-[#9d9d9d]">
      <DockHeader title="Models" />
      <div className="mt-[3px] flex flex-1 gap-3.5 pr-[13px]">
        <div className="min-w-0 flex-1 border border-[#b4b4b4] border-t-[#8c8c8c] bg-white">
          <table className="w-full table-fixed border-collapse text-left">
            <colgroup>
              <col />
              <col className="w-10" />
              <col className="w-[38px]" />
              <col className="w-[57px]" />
              <col className="w-[101px]" />
            </colgroup>
            <thead className="bg-[#ececec] text-[22px] leading-6 text-[#262626]">
              <tr className="h-[35px] align-top">
                <th className="p-0 pt-1 font-normal">
                  <div className="h-[26px] border-r-2 border-[#c4c4c4] pl-[9px]">Name</div>
                </th>
                <th className="p-0 pt-1 font-normal">
                  <div className="h-[26px] border-r-2 border-[#c4c4c4] text-center">ID</div>
                </th>
                <th className="p-0 pt-1" aria-label="Color">
                  <div className="h-[26px] border-r-2 border-[#c4c4c4]" />
                </th>
                <th className="p-0 pt-1" aria-label="Shown">
                  <div className="flex h-[26px] items-center border-r-2 border-[#c4c4c4] pl-2">
                    <EyeIcon />
                  </div>
                </th>
                <th className="p-0 pt-1" aria-label="Selected">
                  <div className="flex h-[26px] items-center border-r-2 border-[#c4c4c4] pl-3.5">
                    <SelectIcon />
                  </div>
                </th>
              </tr>
            </thead>
            <tbody className="text-[25px] leading-8 text-black">
              <tr className="h-10">
                <td className="py-0 pl-[51px]">1kmo</td>
                <td className="py-0 pr-2.5 pl-0 text-center">1</td>
                <td className="p-0 align-top">
                  <div className="size-8 border-2 border-t-[#e6cba6] border-r-[#5d4f3d] border-b-[#5d4f3d] border-l-[#e6cba6] bg-[#d2b48c]" />
                </td>
                <td className="p-0 pl-[14px]">
                  <span className="grid w-7">
                    <input
                      type="checkbox"
                      aria-label="Show 1kmo"
                      checked={shown}
                      onChange={(e) => setShown(e.target.checked)}
                      className="size-7 appearance-none rounded-md border border-[#b8b8b8] bg-white [grid-area:1/1] checked:border-[#3b86fb] checked:bg-[#3b86fb]"
                    />
                    {shown && (
                      <svg viewBox="0 0 28 28" className="pointer-events-none size-7 [grid-area:1/1]" fill="none" aria-hidden="true">
                        <path d="M7.500 15l4.500 6L20.500 7.500" stroke="#fff" strokeWidth="2.600" strokeLinecap="round" strokeLinejoin="round" />
                      </svg>
                    )}
                  </span>
                </td>
                <td className="p-0 pl-[15px]">
                  <span className="grid w-7">
                    <input
                      type="checkbox"
                      aria-label="Select 1kmo"
                      checked={selected}
                      onChange={(e) => setSelected(e.target.checked)}
                      className="size-7 appearance-none rounded-md border border-[#b8b8b8] bg-white checked:bg-[#3b86fb]"
                    />
                  </span>
                </td>
              </tr>
            </tbody>
          </table>
        </div>
        <div className="flex w-32 flex-col gap-2 pt-[9px] pb-[14px]">
          {modelActions.map((label) => (
            <button
              key={label}
              type="button"
              className="h-10 rounded-lg border border-[#c8c8c8] border-b-[#adadad] bg-white text-[25px] leading-8 text-[#262626] shadow-xs"
            >
              {label}
            </button>
          ))}
        </div>
      </div>
    </section>
  );
}

export default function App() {
  const [command, setCommand] = useState("");

  return (
    <div className="min-h-screen bg-white">
      <div className="flex min-h-screen flex-col overflow-hidden rounded-xl bg-[#ebebeb] font-[Inter,sans-serif]">
        {/* title bar */}
        <header className="grid h-11 grid-cols-[1fr_auto_1fr] items-center border-b border-[#a8a8a8] bg-linear-to-b from-[#e8e8e8] to-[#cdcdcd] px-4">
          <div className="flex gap-4">
            <button type="button" aria-label="Close window" className="size-6 rounded-full border border-[#e0443e] bg-[#ff605c]" />
            <button type="button" aria-label="Minimize window" className="size-6 rounded-full border border-[#dfa032] bg-[#ffbd44]" />
            <button type="button" aria-label="Zoom window" className="size-6 rounded-full border border-[#1dad2b] bg-[#33c748]" />
          </div>
          <h1 className="pt-0.5 text-[25px] leading-8 text-[#4a4a4a]">ChimeraX</h1>
          <div />
        </header>

        {/* sequence viewer */}
        <DockHeader title="Seqview [ID: 56935.ali]" />
        <SequencePanel />
        <div className="border-t border-[#6a6a6a] bg-linear-to-b from-[#eaeaea] to-[#b2b2b2] pt-[5px] pr-[22px] pb-1 pl-1">
          <div className="h-11 bg-[#d9d9d9]" />
        </div>

        {/* dock tabs */}
        <div className="flex items-start border-b-2 border-[#9d9d9d]">
          <div className="h-5 flex-1 rounded-bl-lg border-b border-[#d2d2d2] bg-[#e2e2e2]" />
          <div role="tablist" className="mx-1.5 mt-px flex h-10 text-[25px] leading-8">
            <button
              type="button"
              role="tab"
              aria-selected="true"
              className="w-[323px] rounded-l-lg border border-r-0 border-[#3f8bf5] bg-linear-to-b from-[#6ba6fd] to-[#0568ff] pt-0.5 pr-2 text-center text-white"
            >
              Seqview [ID: 56935.ali]
            </button>
            <button
              type="button"
              role="tab"
              aria-selected="false"
              className="w-[131px] rounded-r-lg border border-l-0 border-[#c0c0c0] bg-white pt-0.5 pl-2 text-center text-[#262626]"
            >
              Toolbar
            </button>
          </div>
          <div className="h-5 flex-1 rounded-br-lg border-b border-[#d2d2d2] bg-[#e2e2e2]" />
        </div>

        {/* graphics + side panels */}
        <main className="grid grid-cols-[805fr_795fr] border-b border-[#9d9d9d]">
          <div className="border-t border-r border-[#9d9d9d] bg-black">
            <ProteinView />
          </div>
          <div className="flex min-w-0 flex-col border-l border-[#ebebeb]">
            <LogPanel />
            <ModelsPanel />
          </div>
        </main>

        {/* command line */}
        <form className="flex flex-1 items-center pr-[3px] pb-0.5 pl-1" onSubmit={(e) => e.preventDefault()}>
          <label htmlFor="command" className="w-[129px] pt-0.5 text-[25px] leading-8 whitespace-nowrap text-black">
            Command:
          </label>
          <div className="flex h-14 flex-1 rounded-lg bg-[#90b6ee] p-2">
            <input
              id="command"
              type="text"
              value={command}
              onChange={(e) => setCommand(e.target.value)}
              className="min-w-0 flex-1 border border-r-0 border-[#b0b0b0] bg-white px-2 text-[25px] outline-none"
            />
            <button
              type="button"
              aria-label="Command history"
              className="flex w-[35px] items-center justify-center rounded-r-md border border-[#3f8bf5] bg-linear-to-b from-[#6ba6fd] to-[#0568ff]"
            >
              <svg viewBox="0 0 16 10" className="h-2.5 w-4" fill="none" aria-hidden="true">
                <path d="M1.500 1.500L8 8L14.500 1.500" stroke="#fff" strokeWidth="2.800" />
              </svg>
            </button>
          </div>
        </form>

        {/* status bar */}
        <footer className="flex items-stretch border-t border-[#6a6a6a] bg-linear-to-b from-[#eaeaea] to-[#b2b2b2] pt-[5px] pr-[22px] pb-1 pl-1">
          <div className="flex-1 bg-[#d9d9d9]" />
          <button
            type="button"
            aria-label="Resize window"
            className="ml-3 flex size-[52px] items-center justify-center border-2 border-[#adadad] bg-linear-to-b from-[#e4e4e4] to-[#f8f8f8]"
          >
            <ResizeIcon />
          </button>
          <button
            type="button"
            aria-label="Rapid access"
            className="ml-3 flex size-[52px] items-center justify-center border-2 border-[#adadad] bg-linear-to-b from-[#e4e4e4] to-[#f8f8f8]"
          >
            <LightningIcon />
          </button>
        </footer>
      </div>
    </div>
  );
}
